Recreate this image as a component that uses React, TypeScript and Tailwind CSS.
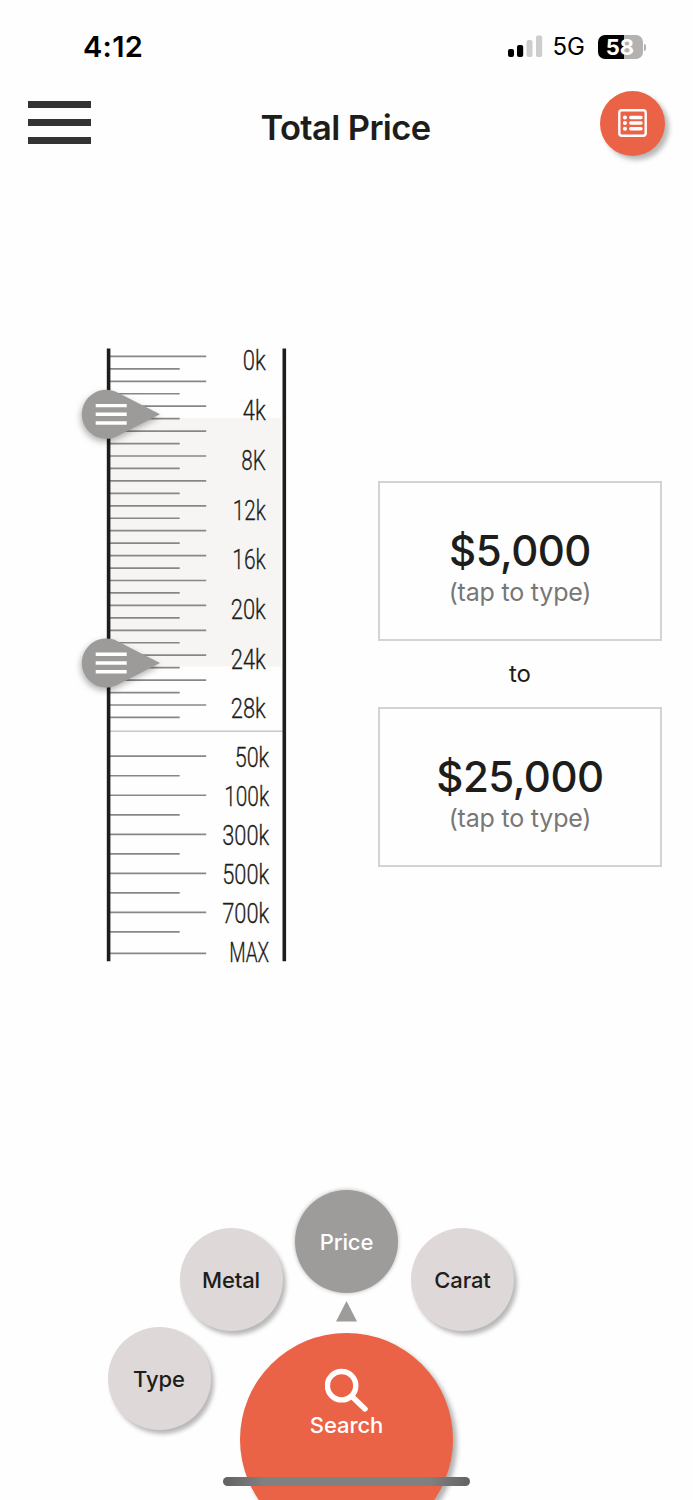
import React from 'react';

interface ScaleLabel {
  text: string;
  y: number;
  width: number;
}

const RULER_TOP = 345;

const lowLabels: ScaleLabel[] = [
  { text: '0k', y: 370.4, width: 23 },
  { text: '4k', y: 420.1, width: 23 },
  { text: '8K', y: 469.8, width: 24.5 },
  { text: '12k', y: 519.5, width: 33 },
  { text: '16k', y: 569.2, width: 33.5 },
  { text: '20k', y: 618.9, width: 35 },
  { text: '24k', y: 668.6, width: 35 },
  { text: '28k', y: 718.3, width: 35 },
];

const highLabels: ScaleLabel[] = [
  { text: '50k', y: 766.7, width: 34.5 },
  { text: '100k', y: 805.7, width: 45 },
  { text: '300k', y: 844.8, width: 47 },
  { text: '500k', y: 883.8, width: 47 },
  { text: '700k', y: 922.8, width: 47 },
  { text: 'MAX', y: 961.8, width: 40 },
];

const lowTicks = Array.from({ length: 30 }, (_, i) => 356.4 + i * 12.45);
const highTicks = [...Array.from({ length: 10 }, (_, i) => 756.2 + i * 19.53), 953.4];

const StatusBar: React.FC = () => (
  <div className="flex h-[92px] items-start justify-between pl-[83px] pr-[47px] pt-[32px] text-black">
    <span className="text-[29px] font-semibold leading-[30px] tracking-[0.3px]">4:12</span>
    <div className="flex items-center">
      <svg width="36" height="24" viewBox="0 0 36 24">
        <rect x="1" y="14" width="6" height="8" rx="2" />
        <rect x="10" y="10" width="6.2" height="12" rx="2" />
        <rect x="19.5" y="5" width="6" height="17" rx="2" fill="#cdcdcd" />
        <rect x="29" y="0.5" width="6.2" height="21.5" rx="2" fill="#cdcdcd" />
      </svg>
      <span className="ml-[10px] w-[35px] text-[24px] leading-[30px] tracking-[-0.2px]">5G</span>
      <div className="ml-[10px] flex h-6 w-[45px] items-center justify-center rounded-[7px] bg-[linear-gradient(to_right,#000_26px,#b2b2b2_26px)] text-[22px] font-bold leading-6 text-white">
        58
      </div>
      <div className="ml-[1px] h-[7px] w-[2.5px] rounded-r-full bg-[#b2b2b2]" />
    </div>
  </div>
);

const Header: React.FC = () => (
  <header className="flex h-16 items-start justify-between pl-[28px] pr-[28px]">
    <button className="mt-[9px] flex w-[63px] flex-col gap-[11px]" aria-label="Menu">
      <span className="h-[7px] w-full bg-[#333]" />
      <span className="h-[7px] w-full bg-[#333]" />
      <span className="h-[7px] w-full bg-[#333]" />
    </button>
    <h1 className="mt-[15px] text-[34.5px] font-semibold leading-[42px] tracking-[-0.6px]">Total Price</h1>
    <button
      className="-mt-[1px] flex size-[65px] items-center justify-center rounded-full bg-[#eb6347] pb-[2px] shadow-[4px_4px_5px_rgba(0,0,0,0.28)]"
      aria-label="List"
    >
      <svg width="29" height="28" viewBox="0 0 29 28" fill="none" stroke="#fff">
        <rect x="1.3" y="1.3" width="26.4" height="25.4" rx="2.5" strokeWidth="2.4" />
        <path d="M12.8 8.5h10.2M12.8 14h10.2M12.8 19.7h10.2" strokeWidth="3.4" strokeLinecap="round" />
        <path d="M6.9 8.5h.1M6.9 14h.1M6.9 19.7h.1" strokeWidth="4" strokeLinecap="round" />
      </svg>
    </button>
  </header>
);

const Handle: React.FC<{ y: number }> = ({ y }) => (
  <g transform={`translate(0 ${y})`}>
    <path
      d="M160 0L117.5 -21.8A24.5 24.5 0 1 0 117.5 21.8Z"
      fill="#9d9b99"
      className="drop-shadow-[-1px_3px_3px_rgba(0,0,0,0.3)]"
    />
    <path d="M95.7 -8.7h31M95.7 0h31M95.7 8.7h31" stroke="#fff" strokeWidth="3.4" />
  </g>
);

const PriceRuler: React.FC = () => (
  <svg width="300" height="625" viewBox={`0 ${RULER_TOP} 300 625`} className="shrink-0">
    <rect x="110" y="418" width="171" height="248.5" fill="#f6f5f4" />
    {lowTicks.map((y, i) => (
      <path key={y} d={`M110 ${y}H${i % 2 ? 179.7 : 206.2}`} stroke="#878787" strokeWidth="1.7" />
    ))}
    <path d="M110 731.3H283" stroke="#c8c8c8" strokeWidth="1.6" />
    {highTicks.map((y, i) => (
      <path key={y} d={`M110 ${y}H${i % 2 ? 179.7 : 206.2}`} stroke="#878787" strokeWidth="1.7" />
    ))}
    <path d="M108.6 348.5V961.3M284.3 348.5V961.3" stroke="#1d1d1b" strokeWidth="3.6" />
    <g
      fill="#1d1d1b"
      stroke="#1d1d1b"
      strokeWidth="0.3"
      fontSize="28.5"
      fontFamily="Roboto, sans-serif"
      fontWeight="300"
    >
      {lowLabels.map((l) => (
        <text key={l.text} x={265.8 - l.width} y={l.y} textLength={l.width} lengthAdjust="spacingAndGlyphs">
          {l.text}
        </text>
      ))}
      {highLabels.map((l) => (
        <text key={l.text} x={269.2 - l.width} y={l.y} textLength={l.width} lengthAdjust="spacingAndGlyphs">
          {l.text}
        </text>
      ))}
    </g>
    <Handle y={414.3} />
    <Handle y={663} />
  </svg>
);

const PriceBox: React.FC<{ amount: string }> = ({ amount }) => (
  <button className="flex h-40 w-full flex-col items-center border-2 border-[#d3d3cf] pt-[43px]">
    <span className="text-[42px] font-medium leading-[50px] tracking-[-0.5px]">{amount}</span>
    <span className="text-[25px] leading-[32px] tracking-[-0.2px] text-[#777]">(tap to type)</span>
  </button>
);

const Bubble: React.FC<{ label: string; className: string }> = ({ label, className }) => (
  <button
    className={`flex size-[103px] shrink-0 items-center justify-center rounded-full pt-[1px] text-[22px] font-medium tracking-[-0.1px] ${className}`}
  >
    {label}
  </button>
);

const BottomNav: React.FC = () => (
  <nav className="mt-[220px]">
    <div className="flex items-start pl-[179.5px]">
      <Bubble label="Metal" className="mt-[38px] bg-[#ded8d8] shadow-[3px_4px_4px_rgba(0,0,0,0.28)]" />
      <div className="ml-[12.5px] flex flex-col items-center">
        <Bubble label="Price" className="bg-[#9d9c9a] text-white shadow-[0_0_4px_rgba(0,0,0,0.3)]" />
        <svg width="21" height="21" viewBox="0 0 21 21" className="mt-2">
          <path d="M10.5 0L21 20.5H0Z" fill="#9d9c9a" />
        </svg>
      </div>
      <Bubble label="Carat" className="ml-[13px] mt-[38px] bg-[#ded8d8] shadow-[3px_4px_4px_rgba(0,0,0,0.28)]" />
    </div>
    <div className="-mt-[4px] flex items-start pl-[107.5px]">
      <Bubble label="Type" className="bg-[#ded8d8] shadow-[3px_4px_4px_rgba(0,0,0,0.28)]" />
      <button className="ml-[29.5px] mt-[5.5px] flex size-[213px] shrink-0 flex-col items-center rounded-full bg-[#eb6347] pt-[35.5px] text-white shadow-[4px_4px_5px_rgba(0,0,0,0.3)]">
        <svg width="44" height="44" viewBox="0 0 44 44" fill="none" stroke="#fff" strokeWidth="5.4">
          <circle cx="16.6" cy="17.7" r="14.2" />
          <path d="M27 28.5L40 41" strokeLinecap="round" />
        </svg>
        <span className="text-[22px] font-medium leading-[26px] tracking-[-0.1px]">Search</span>
      </button>
    </div>
  </nav>
);

const App: React.FC = () => {
  return (
    <div className="relative h-[1500px] w-[693px] overflow-hidden bg-[#fefefe] font-['Inter',sans-serif] text-[#1d1d1b]">
      <StatusBar />
      <Header />
      <main className="mt-[189px] flex h-[625px] items-start">
        <PriceRuler />
        <div className="ml-[78px] mt-[136px] flex w-[284px] flex-col items-center">
          <PriceBox amount="$5,000" />
          <span className="flex h-[66px] items-center text-[24px]">to</span>
          <PriceBox amount="$25,000" />
        </div>
      </main>
      <BottomNav />
      <div className="absolute bottom-[14.5px] left-[223px] h-[9px] w-[247px] rounded-full bg-[linear-gradient(to_right,#626262,#808080_40px,#808080_207px,#626262)]" />
    </div>
  );
};

export default App;
